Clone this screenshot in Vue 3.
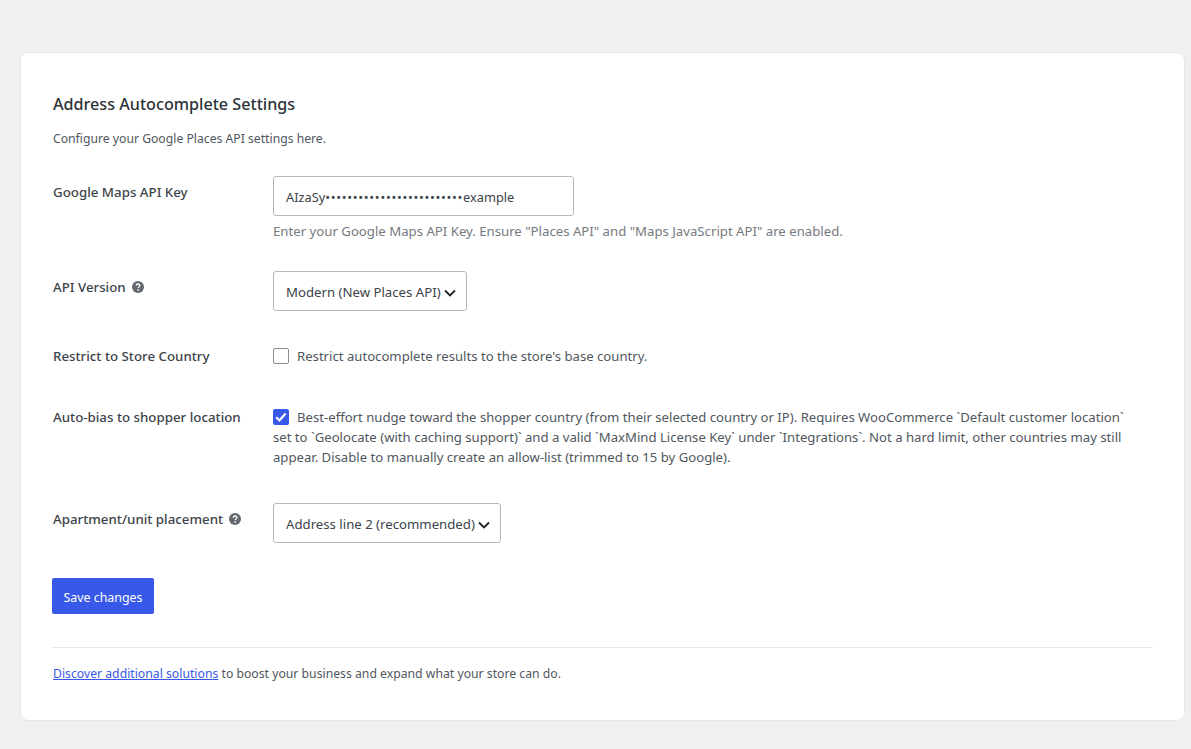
<template>
  <div class="page">
    <div class="card">
      <h2 class="title">Address Autocomplete Settings</h2>
      <p class="intro">Configure your Google Places API settings here.</p>

      <div class="row row-key">
        <label class="label">Google Maps API Key</label>
        <div class="field">
          <div class="input">AIzaSy<span class="dots">{{ dots }}</span>example</div>
          <p class="help">Enter your Google Maps API Key. Ensure "Places API" and "Maps JavaScript API" are enabled.</p>
        </div>
      </div>

      <div class="row row-version">
        <label class="label">
          API Version
          <svg class="tip" viewBox="0 0 20 20"><circle cx="10" cy="10" r="10" fill="#646970" /><path d="M7 7.600c.2-1.700 1.400-2.600 3.100-2.600 1.800 0 3 1 3 2.500 0 1.200-.7 1.800-1.600 2.400-.8.500-1.100.9-1.100 1.700" fill="none" stroke="#fff" stroke-width="2.200" /><circle cx="10.300" cy="14.800" r="1.400" fill="#fff" /></svg>
        </label>
        <div class="select-wrap">
          <select class="select version-select">
            <option>Modern (New Places API)</option>
          </select>
          <svg class="chevron" viewBox="0 0 12 8"><path d="M1 1.500l5 5 5-5" fill="none" stroke="#1d2327" stroke-width="1.800" /></svg>
        </div>
      </div>

      <div class="row row-restrict">
        <label class="label">Restrict to Store Country</label>
        <label class="check">
          <span class="box"></span>
          <span>Restrict autocomplete results to the store's base country.</span>
        </label>
      </div>

      <div class="row row-bias">
        <label class="label">Auto-bias to shopper location</label>
        <p class="bias-text">
          <span class="box on">
            <svg viewBox="0 0 16 16"><path d="M3.200 8.300l3.200 3.200 6.200-7" fill="none" stroke="#fff" stroke-width="2.200" /></svg>
          </span>Best-effort nudge toward the shopper country (from their selected country or IP). Requires WooCommerce `Default customer location` set to `Geolocate (with caching support)` and a valid `MaxMind License Key` under `Integrations`. Not a hard limit, other countries may still appear. Disable to manually create an allow-list (trimmed to 15 by Google).
        </p>
      </div>

      <div class="row row-placement">
        <label class="label">
          Apartment/unit placement
          <svg class="tip" viewBox="0 0 20 20"><circle cx="10" cy="10" r="10" fill="#646970" /><path d="M7 7.600c.2-1.700 1.400-2.600 3.100-2.600 1.800 0 3 1 3 2.500 0 1.200-.7 1.800-1.600 2.400-.8.500-1.100.9-1.100 1.700" fill="none" stroke="#fff" stroke-width="2.200" /><circle cx="10.300" cy="14.800" r="1.400" fill="#fff" /></svg>
        </label>
        <div class="select-wrap">
          <select class="select placement-select">
            <option>Address line 2 (recommended)</option>
          </select>
          <svg class="chevron" viewBox="0 0 12 8"><path d="M1 1.500l5 5 5-5" fill="none" stroke="#1d2327" stroke-width="1.800" /></svg>
        </div>
      </div>

      <button class="save">Save changes</button>

      <div class="footer">
        <a class="link" href="#">Discover additional solutions</a> to boost your business and expand what your store can do.
      </div>
    </div>
  </div>
</template>

<script setup>
const dots = '•'.repeat(25)
</script>

<style scoped>
.page {
  min-height: 749px;
  box-sizing: border-box;
  padding: 52px 6px 28px 20px;
  background: #f0f0f1;
  font-family: "Noto Sans", "Open Sans", sans-serif;
  font-size: 13.150px;
  color: #50575e;
}
.card {
  height: 669px;
  box-sizing: border-box;
  padding: 40px 31px 0;
  background: #fff;
  border: 1px solid #e6e7e8;
  border-radius: 8px;
}
.title {
  margin: 0;
  padding-left: 1px;
  font-size: 16.150px;
  line-height: 22px;
  font-weight: 500;
  color: #2c3338;
}
.intro {
  margin: 14px 0 0;
  padding-left: 1px;
  font-size: 12.200px;
  line-height: 20px;
}
.row {
  display: flex;
  align-items: flex-start;
}
.row-key { margin-top: 27px; }
.row-version { margin-top: 30px; }
.row-restrict { margin-top: 35px; }
.row-bias { margin-top: 41px; }
.row-placement { margin-top: 36px; }
.label {
  flex: 0 0 221px;
  box-sizing: border-box;
  padding-left: 1px;
  display: flex;
  align-items: center;
  gap: 6px;
  font-size: 13.300px;
  font-weight: 500;
  line-height: 20px;
  color: #3c434a;
}
.row-key .label { padding-top: 6px; }
.row-version .label { padding-top: 6px; }
.row-placement .label { padding-top: 6px; }
.field { flex: 1; }
.input {
  width: 301px;
  height: 40px;
  box-sizing: border-box;
  padding: 0 12px;
  border: 1px solid #b5b8bb;
  border-radius: 3px;
  background: #fff;
  line-height: 40px;
  font-size: 12.800px;
  color: #3c434a;
  white-space: nowrap;
}
.dots { letter-spacing: 0.700px; }
.help {
  margin: 5px 0 0;
  font-size: 13.200px;
  line-height: 20px;
  color: #757a80;
}
.select-wrap {
  position: relative;
  display: inline-block;
}
.select {
  display: block;
  height: 40px;
  box-sizing: border-box;
  padding: 2px 24px 0 12px;
  border: 1px solid #b5b8bb;
  border-radius: 3px;
  background: #fff;
  font: inherit;
  font-size: 13.200px;
  color: #3c434a;
  appearance: none;
}
.version-select { width: 194px; }
.placement-select { width: 228px; }
.chevron {
  position: absolute;
  top: 18px;
  right: 11px;
  width: 12px;
  height: 8px;
}
.tip {
  width: 12px;
  height: 12px;
}
.check {
  display: flex;
  align-items: center;
  gap: 8px;
  line-height: 20px;
}
.box {
  display: inline-block;
  width: 16px;
  height: 16px;
  box-sizing: border-box;
  border: 1px solid #8c8f94;
  border-radius: 2px;
  background: #fff;
}
.box.on {
  margin-right: 8px;
  vertical-align: -3px;
  border: 0;
  background: #3858e9;
}
.box.on svg {
  display: block;
  width: 16px;
  height: 16px;
}
.bias-text {
  flex: 1;
  margin: 0;
  padding-right: 15px;
  line-height: 20px;
}
.save {
  display: block;
  width: 102px;
  height: 36px;
  margin-top: 35px;
  padding: 2px 0 0;
  border: 0;
  border-radius: 2px;
  background: #3858e9;
  color: #fff;
  font: inherit;
  font-size: 12.400px;
}
.footer {
  margin-top: 33px;
  padding: 16px 0 0 1px;
  border-top: 1px solid #e6e7e8;
  font-size: 12.230px;
  line-height: 20px;
}
.link { color: #3858e9; }
</style>
